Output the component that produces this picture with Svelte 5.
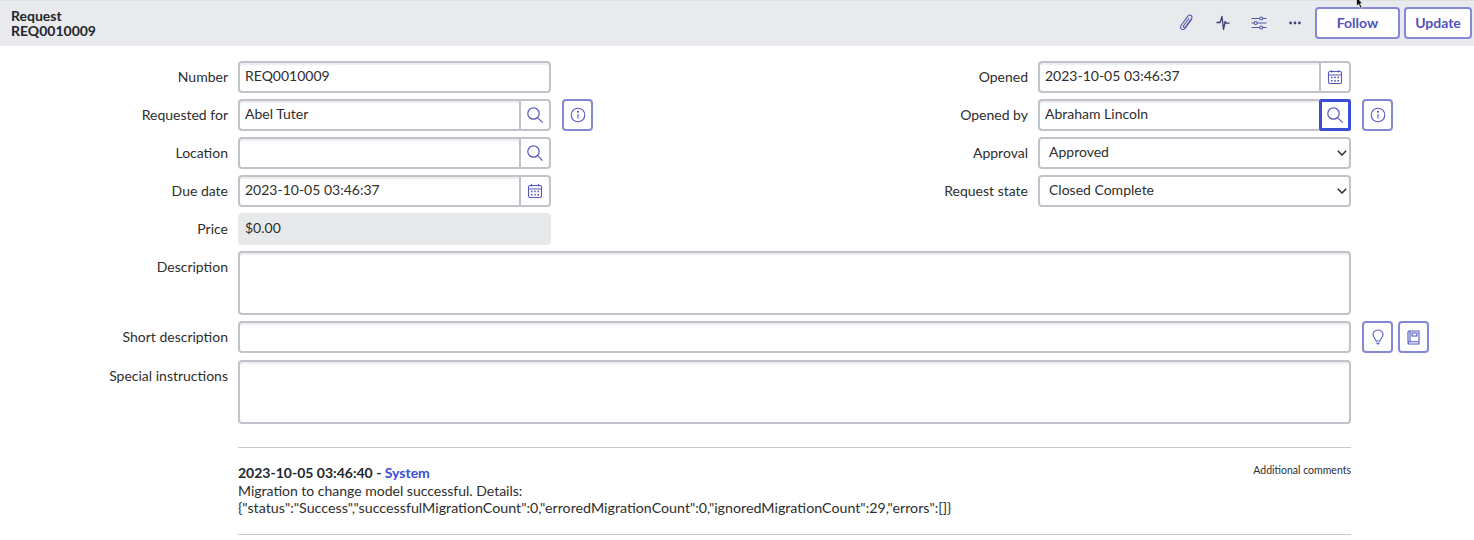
<script>
  const leftRows = [
    { label: "Number", value: "REQ0010009" },
    { label: "Requested for", value: "Abel Tuter", addon: "search", info: true },
    { label: "Location", value: "", addon: "search" },
    { label: "Due date", value: "2023-10-05 03:46:37", addon: "calendar" },
    { label: "Price", value: "$0.00", readonly: true },
  ];
  const rightRows = [
    { label: "Opened", value: "2023-10-05 03:46:37", addon: "calendar" },
    { label: "Opened by", value: "Abraham Lincoln", addon: "search", focused: true, info: true },
    { label: "Approval", select: "Approved" },
    { label: "Request state", select: "Closed Complete" },
  ];
</script>

{#snippet searchIcon()}
  <svg width="18" height="18" viewBox="0 0 18 18" fill="none" stroke="currentColor" stroke-width="1.2">
    <circle cx="7.5" cy="7.5" r="5.7" />
    <path d="M11.7 11.7 16.6 16.6" />
  </svg>
{/snippet}

{#snippet calendarIcon()}
  <svg width="16" height="16" viewBox="0 0 16 16" fill="none" stroke="currentColor" stroke-width="1.1">
    <rect x="1.5" y="2.5" width="13" height="12" rx="1.5" />
    <path d="M1.5 6h13M4.500 1v2.500M11.500 1v2.500" />
    <path d="M4 8.500h1.600M7.200 8.500h1.600M10.400 8.500H12M4 11.800h1.600M7.200 11.800h1.600M10.400 11.800H12" stroke-width="1.6" />
  </svg>
{/snippet}

{#snippet infoIcon()}
  <svg width="16" height="16" viewBox="0 0 16 16" fill="none" stroke="currentColor" stroke-width="1.1">
    <circle cx="8" cy="8" r="6.800" />
    <path d="M8 7v4.600" />
    <circle cx="8" cy="4.700" r="0.500" fill="currentColor" />
  </svg>
{/snippet}

{#snippet field(row)}
  <div class="row">
    <span class="label">{row.label}</span>
    <div class="control">
      {#if row.select}
        <div class="input select">
          <span>{row.select}</span>
          <svg class="chevron" width="10" height="6" viewBox="0 0 10 6" fill="none" stroke="currentColor" stroke-width="1.5">
            <path d="M.8.8 5 5 9.200.8" />
          </svg>
        </div>
      {:else}
        <div class="input" class:readonly={row.readonly} class:joined={row.addon}>{row.value}</div>
        {#if row.addon}
          <div class="addon" class:focused={row.focused}>
            {#if row.addon === "search"}
              {@render searchIcon()}
            {:else}
              {@render calendarIcon()}
            {/if}
          </div>
        {/if}
      {/if}
    </div>
    {#if row.info}
      <button class="side">{@render infoIcon()}</button>
    {/if}
  </div>
{/snippet}

<div class="page">
  <svg class="cursor" width="9" height="9" viewBox="0 0 9 9" fill="#111" stroke="#fff" stroke-width="0.6">
    <path d="M0.500 -3 6.500 3.500H4.200L6 7.500 4.400 8.200 2.700 4.300 0.500 6Z" />
  </svg>
  <header class="bar">
    <div class="title">
      <div>Request</div>
      <div>REQ0010009</div>
    </div>
    <div class="actions">
      <span class="tool">
        <svg width="16" height="18" viewBox="0 0 16 18" fill="none" stroke="currentColor" stroke-width="1.1">
          <path d="M12.600 5.400 6.200 14.300c-1 1.400-2.600 1.600-3.700.8s-1.300-2.400-.3-3.800L8.900 2.200c.8-1.100 2.100-1.400 3.200-.7 1 .7 1.200 2 .4 3.100L6.400 13c-.4.6-1.100.7-1.600.3-.5-.3-.6-1-.2-1.600L10 4.300" />
        </svg>
      </span>
      <span class="tool">
        <svg width="14" height="16" viewBox="0 0 14 16" fill="none" stroke="#3d3f73" stroke-width="1.3" stroke-linejoin="round">
          <path d="M.5 7.500h3.600L6 1.500 7.500 14.500 9.200 6.500l.9 1.600h3.400" />
        </svg>
      </span>
      <span class="tool">
        <svg width="16" height="14" viewBox="0 0 16 14" fill="none" stroke="currentColor" stroke-width="1.1">
          <path d="M.5 2.500h8.200M11.800 2.500h3.700M.5 7h2.700M6.200 7h9.300M.5 11.500h8.200M11.800 11.500h3.700" />
          <circle cx="10.200" cy="2.500" r="1.500" />
          <circle cx="4.700" cy="7" r="1.500" />
          <circle cx="10.200" cy="11.500" r="1.500" />
        </svg>
      </span>
      <span class="tool">
        <svg width="12" height="4" viewBox="0 0 12 4" fill="#3d3f73">
          <circle cx="1.600" cy="2" r="1.400" />
          <circle cx="6" cy="2" r="1.400" />
          <circle cx="10.400" cy="2" r="1.400" />
        </svg>
      </span>
      <button class="btn follow">Follow</button>
      <button class="btn update">Update</button>
    </div>
  </header>

  <main class="form">
    <div class="columns">
      <div class="col">
        {#each leftRows as row}
          {@render field(row)}
        {/each}
      </div>
      <div class="col">
        {#each rightRows as row}
          {@render field(row)}
        {/each}
      </div>
    </div>

    <div class="row wide">
      <span class="label">Description</span>
      <div class="input area"></div>
    </div>
    <div class="row wide short">
      <span class="label">Short description</span>
      <div class="input full"></div>
      <button class="side">
        <svg width="12" height="16" viewBox="0 0 12 16" fill="none" stroke="currentColor" stroke-width="1.1" stroke-linejoin="round">
          <path d="M6 1C3.100 1 1 3.100 1 5.600c0 2.300 2.300 3.900 3.200 6.400h3.600C8.700 9.500 11 7.900 11 5.600 11 3.100 8.900 1 6 1Z" />
          <path d="M4.500 13.700 6 15.200l1.500-1.500" />
        </svg>
      </button>
      <button class="side second">
        <svg width="13" height="15" viewBox="0 0 13 15" fill="none" stroke="currentColor" stroke-width="1.1">
          <path d="M1 12.500V2C1 1.400 1.400 1 2 1H12v10.800H2.300C1.500 11.800 1 12.300 1 13S1.500 14 2.300 14H12v-2.200" />
          <path d="M3 1v10.800" />
          <rect x="5" y="3" width="5" height="3" />
        </svg>
      </button>
    </div>
    <div class="row wide">
      <span class="label">Special instructions</span>
      <div class="input area"></div>
    </div>

    <section class="activity">
      <div class="entry-head">
        <div class="who">2023-10-05 03:46:40 - <span class="user">System</span></div>
        <div class="kind">Additional comments</div>
      </div>
      <div class="msg">Migration to change model successful. Details:</div>
      <div class="msg json">{'{"status":"Success","successfulMigrationCount":0,"erroredMigrationCount":0,"ignoredMigrationCount":29,"errors":[]}'}</div>
    </section>
  </main>
</div>

<style>
  :global(body) {
    margin: 0;
    background: #fff;
  }

  .page {
    position: relative;
    font-family: Lato, "Open Sans", sans-serif;
    font-size: 14px;
    color: #2e2e2e;
    height: 540px;
    overflow: hidden;
  }

  .cursor {
    position: absolute;
    left: 1356px;
    top: 0;
  }

  .bar {
    height: 46px;
    background: #e8eaee;
    border-top: 1px solid #dfe1e5;
    box-sizing: border-box;
    display: flex;
    justify-content: space-between;
    align-items: center;
    padding: 0 2px 1px 11px;
  }

  .title {
    font-size: 14px;
    font-weight: 700;
    line-height: 15px;
    color: #23262b;
  }

  .actions {
    display: flex;
    align-items: center;
  }

  .tool {
    width: 36px;
    display: flex;
    justify-content: center;
    color: #5558a8;
  }

  .btn {
    font: 700 14px Lato, sans-serif;
    height: 32px;
    background: #fff;
    color: #4f52bd;
    border: 2px solid #8588d6;
    border-radius: 4px;
    padding: 0 0 2px;
  }

  .follow {
    width: 85px;
    margin-left: 2px;
  }

  .update {
    width: 68px;
    margin-left: 4px;
  }

  .form {
    padding-top: 15px;
  }

  .columns {
    display: grid;
    grid-template-columns: 800px 800px;
  }

  .row {
    display: flex;
    align-items: flex-start;
    margin-bottom: 6px;
  }

  .label {
    width: 228px;
    margin-right: 10px;
    flex: none;
    text-align: right;
    line-height: 31px;
    color: #2e2e2e;
  }

  .control {
    width: 313px;
    display: flex;
    flex: none;
  }

  .input {
    box-sizing: border-box;
    flex: 1;
    min-width: 0;
    height: 32px;
    line-height: 25px;
    padding: 0 5px;
    background: #fff;
    border: 2px solid #c0c3c9;
    border-radius: 4px;
    box-shadow: inset 0 2px 1px #eceef0;
    color: #2e2e2e;
  }

  .joined {
    border-radius: 4px 0 0 4px;
    border-right: none;
  }

  .readonly {
    background: #e8e9eb;
    border-color: #e8e9eb;
    box-shadow: none;
  }

  .select {
    display: flex;
    justify-content: space-between;
    align-items: center;
    padding: 0 2px 0 9px;
    box-shadow: none;
  }

  .select span {
    margin-bottom: 3px;
  }

  .chevron {
    color: #2e2e2e;
  }

  .addon {
    box-sizing: border-box;
    width: 32px;
    height: 32px;
    flex: none;
    display: flex;
    align-items: center;
    justify-content: center;
    border: 2px solid #c0c3c9;
    border-radius: 0 4px 4px 0;
    color: #5558c0;
  }

  .addon.focused {
    border: 3px solid #3a4fd6;
    border-radius: 2px;
  }

  .side {
    box-sizing: border-box;
    width: 31px;
    height: 32px;
    margin-left: 11px;
    flex: none;
    padding: 0;
    display: flex;
    align-items: center;
    justify-content: center;
    background: #fff;
    border: 2px solid #8588d6;
    border-radius: 4px;
    color: #5558c0;
  }

  .side.second {
    margin-left: 5px;
  }

  .full {
    width: 1113px;
    flex: none;
  }

  .area {
    width: 1113px;
    height: 64px;
    flex: none;
  }

  .short {
    margin-bottom: 7px;
  }

  .activity {
    margin: 23px 0 0 238px;
    width: 1113px;
    border-top: 1px solid #c5c8cd;
    border-bottom: 1px solid #c5c8cd;
    padding: 16px 0;
    box-sizing: border-box;
    height: 88px;
    line-height: 17px;
  }

  .entry-head {
    display: flex;
    justify-content: space-between;
    align-items: flex-start;
    height: 18px;
  }

  .who {
    font-weight: 700;
    color: #23262b;
  }

  .user {
    color: #3a4fd6;
  }

  .kind {
    font-size: 10.500px;
    line-height: 10px;
    margin-top: 1px;
  }

  .json {
    font-size: 14.250px;
  }
</style>
